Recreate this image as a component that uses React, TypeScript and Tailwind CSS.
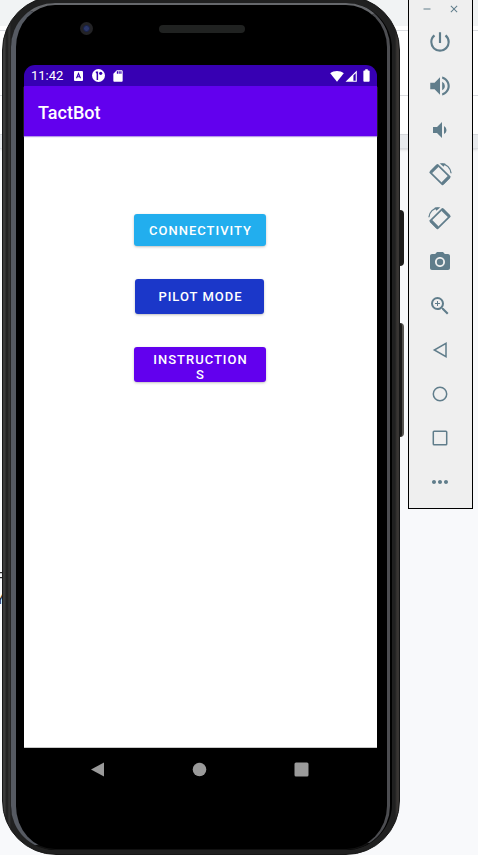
import type { ReactNode } from "react";
import {
  MdBatteryFull,
  MdClose,
  MdMoreHoriz,
  MdPhotoCamera,
  MdPowerSettingsNew,
  MdRemove,
  MdSdCard,
  MdVolumeDown,
  MdVolumeUp,
  MdZoomIn,
} from "react-icons/md";

function RotateIcon({ className = "" }: { className?: string }) {
  return (
    <svg viewBox="0 0 24 24" className={`h-6 w-6 ${className}`} fill="none" stroke="currentColor">
      <path d="M9.6 2.9 21.8 14.9 14.4 22.3 2.2 10.3Z" strokeWidth="1.7" strokeLinejoin="round" />
      <path d="M9.6 3.6 2.9 10.3M21.1 14.9 14.4 21.6" strokeWidth="3" />
      <path d="M13.5 1.8C18.6 2 22.6 6 23.1 11.2" strokeWidth="1.3" />
      <path d="M11.6 1.3 17.4 1.5 15.6 4.8Z" fill="currentColor" stroke="none" />
    </svg>
  );
}

function Outline({ children }: { children: ReactNode }) {
  return (
    <svg viewBox="0 0 24 24" className="h-6 w-6" fill="none" stroke="currentColor" strokeWidth="1.5">
      {children}
    </svg>
  );
}

const tools: { label: string; icon: ReactNode }[] = [
  { label: "Power", icon: <MdPowerSettingsNew size={26} /> },
  { label: "Volume up", icon: <MdVolumeUp size={26} /> },
  { label: "Volume down", icon: <MdVolumeDown size={24} /> },
  { label: "Rotate left", icon: <RotateIcon /> },
  { label: "Rotate right", icon: <RotateIcon className="-scale-x-100" /> },
  { label: "Take screenshot", icon: <MdPhotoCamera size={24} /> },
  { label: "Zoom mode", icon: <MdZoomIn size={24} /> },
  { label: "Back", icon: <Outline><path d="M18 5.3v13.4L6.3 12Z" /></Outline> },
  { label: "Home", icon: <Outline><circle cx="12" cy="12" r="6.7" /></Outline> },
  { label: "Overview", icon: <Outline><rect x="5.3" y="5.3" width="13.4" height="13.4" rx="0.8" /></Outline> },
  { label: "More", icon: <MdMoreHoriz size={24} /> },
];

function EmulatorToolbar() {
  return (
    <aside className="mr-[5px] ml-2 w-[65px] shrink-0 self-start border border-t-0 border-black bg-[#efefef] pr-[2px] pb-1 text-[#607d8b]">
      <div className="flex h-5 items-start justify-between pt-[3px] pr-[10px] pl-3">
        <button aria-label="Minimize"><MdRemove size={12} /></button>
        <button aria-label="Close"><MdClose size={12} /></button>
      </div>
      {tools.map((tool) => (
        <button key={tool.label} aria-label={tool.label} className="flex h-11 w-full items-center justify-center">
          {tool.icon}
        </button>
      ))}
    </aside>
  );
}

function StatusBar() {
  return (
    <div className="flex h-[21px] items-center rounded-t-[11px] bg-[#3700b3] pr-[3px] pl-[7px] text-white">
      <span className="text-[13px] leading-5">11:42</span>
      <svg viewBox="0 0 9 10" className="ml-[11px] h-[10px] w-[9px]">
        <rect width="9" height="10" rx="1" fill="currentColor" />
        <path d="M2.5 7.3 4.5 2.5 6.5 7.3M3.2 5.7h2.6" stroke="#3700b3" strokeWidth="1.1" fill="none" />
      </svg>
      <svg viewBox="0 0 13 13" className="ml-[9px] h-[13px] w-[13px]">
        <circle cx="6.5" cy="6.5" r="6.5" fill="currentColor" />
        <path d="M3.8 2.6h2.3v8.3H4.6V4.6L3.8 4Z" fill="#3700b3" />
        <circle cx="8.7" cy="4.3" r="1.6" fill="#3700b3" />
      </svg>
      <MdSdCard size={14} className="ml-[6px]" />
      <svg viewBox="0 0 14 12" className="ml-auto h-3 w-[14px]" fill="currentColor">
        <path d="M7 11.7.2 3.2C4 .2 10 .2 13.8 3.2Z" />
      </svg>
      <svg viewBox="0 0 12 12" className="ml-px h-3 w-3" fill="currentColor">
        <path d="M11.8.5v11.3H.5ZM10.7 3.3 8.4 5.6v5.1h2.3Z" fillRule="evenodd" />
      </svg>
      <MdBatteryFull size={15} className="ml-[2px]" />
    </div>
  );
}

const actionClass =
  "flex justify-center rounded-[3px] pr-3 pl-[14px] text-center text-[13px] leading-[15px] font-medium tracking-[1px] text-white shadow-sm shadow-black/20";

function Phone() {
  return (
    <div className="relative -mt-1 ml-[2px] flex min-w-0 flex-1">
      {/* power and volume keys on the right edge */}
      <div className="absolute top-[214px] -right-1 h-[56px] w-2 rounded-r-sm bg-[#1c1b1a]" />
      <div className="absolute top-[327px] -right-1 h-[114px] w-2 rounded-r-sm border-r-2 border-[#54524f] bg-[#1c1b1a]" />
      <div className="relative flex min-w-0 flex-1 rounded-[54px] border border-[#171717] bg-[linear-gradient(to_right,#3a3a3a_0,#3a3a3a_2px,#232323_3px,#232323_5px,#383838_6px,#202020_8px,#202020_calc(100%-4px),#383533_calc(100%-2px))] pt-[6px] pr-[7px] pb-1 pl-2">
        <div className="flex min-w-0 flex-1 rounded-[46px] bg-black pr-[2px]">
          <div className="flex min-w-0 flex-1 flex-col rounded-[44px] border-t-2 border-r-[3px] border-b border-l-[5px] border-t-[#66686c] border-r-[#4c4d51] border-b-[#111111] border-l-[#565a62] bg-black pr-[10px] pl-2">
            <div className="flex h-[60px] shrink-0 items-start pt-[17px]">
              <div className="ml-14 flex h-[13px] w-[13px] items-center justify-center rounded-full bg-[#232326]">
                <div className="h-[7px] w-[7px] rounded-full border border-[#17204a] bg-[#2b3768]" />
              </div>
              <div className="mt-[3px] ml-[66px] h-2 w-[86px] rounded-full bg-[#202221]" />
            </div>
            <StatusBar />
            <header className="z-10 flex h-[50px] shrink-0 items-center bg-[#6200ee] px-[14px] pt-[3px] text-white shadow-[0_1px_1px_#b69ae8]">
              <h1 className="text-[18px] leading-6 font-medium">TactBot</h1>
            </header>
            <main className="flex flex-1 flex-col items-center border-b border-[#c8c8c8] bg-white pt-[78px] pr-[2px]">
              <button className={`${actionClass} h-8 w-[132px] items-center bg-[#22aeee]`}>CONNECTIVITY</button>
              <button className={`${actionClass} mt-[33px] h-[35px] w-[129px] items-center bg-[#1b37c9]`}>PILOT MODE</button>
              <button className={`${actionClass} mt-[33px] h-[35px] w-[132px] items-start bg-[#6200ee] pt-[5px]`}>
                <span>INSTRUCTION<br />S</span>
              </button>
            </main>
            <nav className="flex h-[101px] shrink-0 items-start justify-between pt-[14px] pr-[68px] pl-[66px] text-[#9a9a9a]">
              <button aria-label="Back">
                <svg viewBox="0 0 15 15" className="h-[15px] w-[15px]" fill="currentColor"><path d="M14 .5v14L1 7.5Z" /></svg>
              </button>
              <button aria-label="Home">
                <svg viewBox="0 0 15 15" className="h-[15px] w-[15px]" fill="currentColor"><circle cx="7.5" cy="7.5" r="6.8" /></svg>
              </button>
              <button aria-label="Recent apps">
                <svg viewBox="0 0 15 15" className="h-[15px] w-[15px]" fill="currentColor"><rect x=".5" y=".5" width="14" height="14" rx="1.5" /></svg>
              </button>
            </nav>
          </div>
        </div>
      </div>
    </div>
  );
}

export default function App() {
  return (
    <div className="relative isolate flex min-h-screen overflow-hidden bg-[#f8f9fb] font-['Roboto',sans-serif]">
      {/* page lying behind the emulator window */}
      <div className="absolute inset-0 -z-10 flex flex-col" aria-hidden="true">
        <div className="h-[26px] bg-[#f1f3f4]" />
        <div className="h-[5px] border-b border-[#dadce0] bg-white" />
        <div className="h-[65px] border-b border-[#dadce0] bg-white" />
        <div className="h-[39px] border-b border-[#dadce0] bg-white" />
        <div className="h-[14px] border-b border-[#d9dbdf] bg-[#e8eaed] shadow-sm" />
        <div className="mt-[419px] -ml-1 text-[14px] leading-[21px] text-[#333333]">
          <div>F</div>
          <div>Y</div>
        </div>
      </div>
      <Phone />
      <EmulatorToolbar />
    </div>
  );
}
